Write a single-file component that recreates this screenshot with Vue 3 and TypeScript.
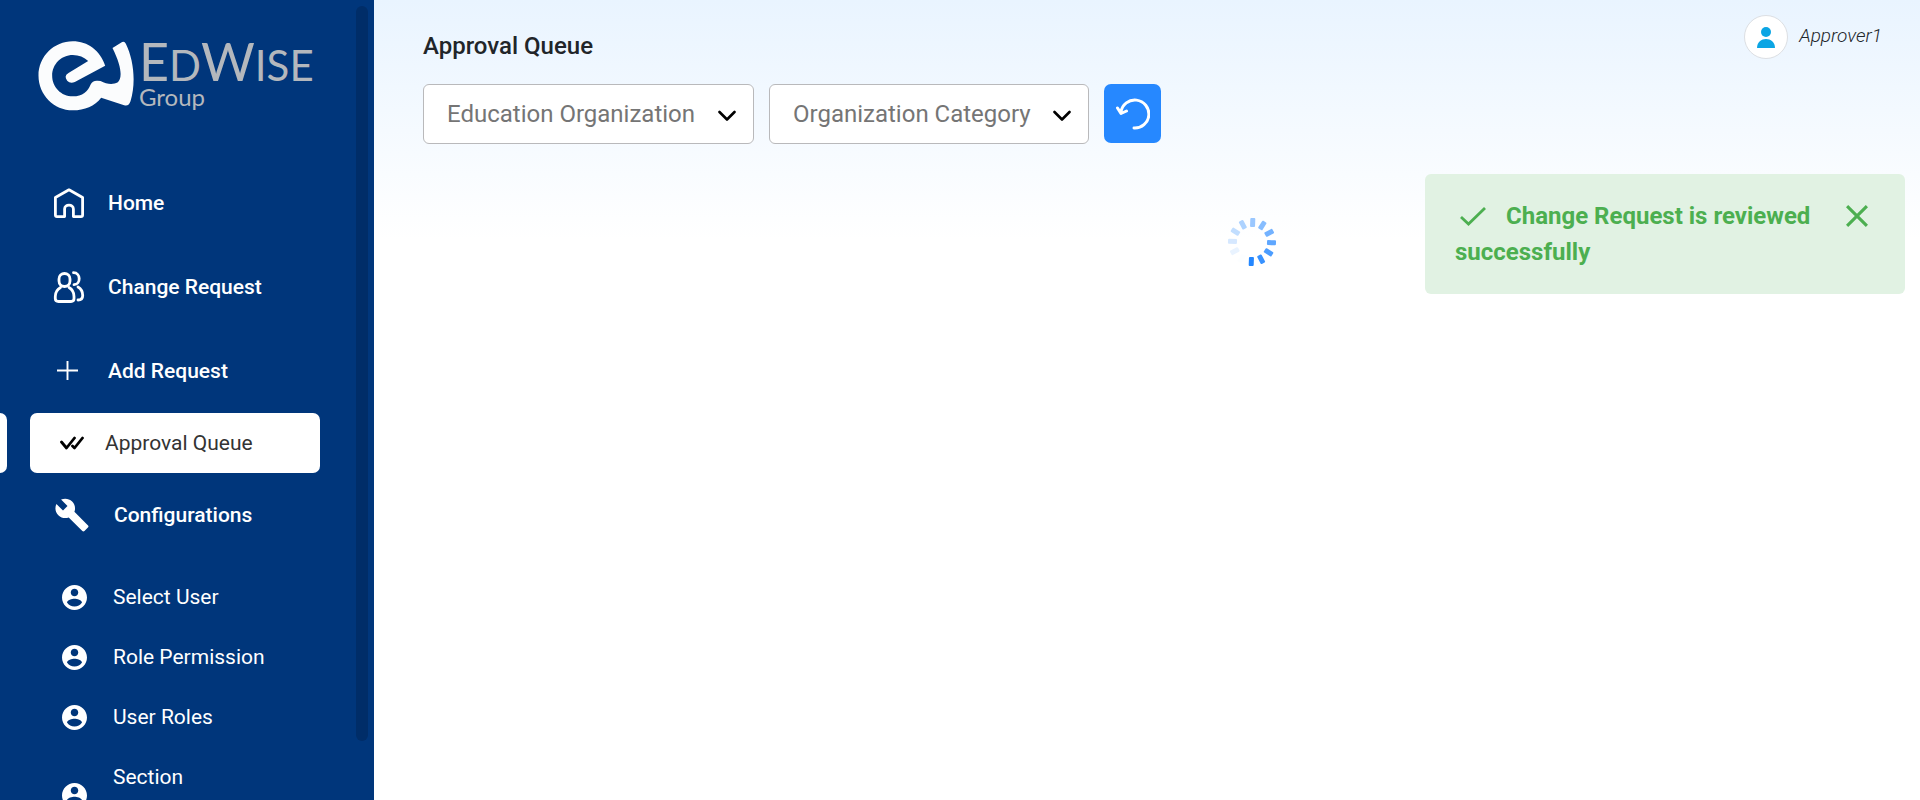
<script setup lang="ts">
import { ref } from 'vue'

const mainLinks = [
  { label: 'Home', icon: 'home' },
  { label: 'Change Request', icon: 'people' },
  { label: 'Add Request', icon: 'plus' },
]
const userLinks = [
  { label: 'Select User', tall: false },
  { label: 'Role Permission', tall: false },
  { label: 'User Roles', tall: false },
  { label: 'Section', tall: true },
]
const organization = ref('')
const category = ref('')
const toastOpen = ref(true)
const spokes = Array.from({ length: 12 }, (_, i) => ({
  angle: 180 - i * 30,
  opacity: 1 - i * 0.09,
}))
</script>

<template>
  <div class="page">
    <aside class="sidebar">
      <div class="brand">
        <svg class="brand-mark" viewBox="0 0 290 210" aria-hidden="true">
          <path d="M189 170C170 195 139 208 104 208C47 208 1 161 1 104S47 1 104 1C149 1 186 29 201 74L110 123Q96 129 87 119Q76 104 91 96L150 60C138 48 122 42 104 42C69 42 42 70 42 104S69 166 104 166C133 166 150 150 157 131Q163 118 178 119L187 120C206 130 224 132 239 124C252 112 252 79 223 21L252 3Q259 0 263 8C287 57 294 125 277 181Q272 197 258 193Z" fill="#fbfcfd" />
        </svg>
        <div class="brand-text">
          <span class="brand-name">E<small>D</small>W<small>ISE</small></span>
          <span class="brand-sub">Group</span>
        </div>
      </div>
      <nav class="nav">
        <a v-for="l in mainLinks" :key="l.label" href="#" class="link">
          <svg v-if="l.icon === 'home'" class="icon" viewBox="0 0 32 32" fill="none" stroke="#fff" stroke-width="2.8" stroke-linejoin="round">
            <path d="M2.400 10.500L16 2.800L29.600 10.500V28Q29.600 29.600 28 29.600H20.400V22C20.400 16.700 11.600 16.700 11.600 22V29.600H4Q2.400 29.600 2.400 28Z" />
          </svg>
          <svg v-else-if="l.icon === 'people'" class="icon" viewBox="0 0 32 32" fill="none" stroke="#fff" stroke-width="2.800" stroke-linecap="round" stroke-linejoin="round">
            <rect x="6" y="2.500" width="11" height="13" rx="5.500" />
            <path d="M7.500 16.500C4 18.500 2.300 20.500 2.300 25.500V27.500Q2.300 30.500 5.500 30.500H18Q21 30.500 21 27.500V25.500C21 20.500 19.500 18.500 16 16.500M20.500 1.700C28 1.700 28 13.500 21 13.700M25 16C28.500 18 29.700 20.500 29.700 24.500C29.700 27.500 28.500 29 25 29" />
          </svg>
          <svg v-else class="icon" viewBox="0 0 32 32" stroke="#fff" stroke-width="1.900">
            <path d="M4 15.500H25M14.500 6V25" />
          </svg>
          {{ l.label }}
        </a>
        <a href="#" class="link active" aria-current="page">
          <svg class="check-icon" viewBox="0 0 24 14" fill="none" stroke="#000" stroke-width="2.800" stroke-linecap="round" stroke-linejoin="round">
            <path d="M1.500 6L6.500 12L14.500 2M12.500 10L14.500 12L22.500 2" />
          </svg>
          Approval Queue
        </a>
        <a href="#" class="link config">
          <svg class="wrench-icon" viewBox="0 0 24 24" fill="#fff"><path d="M22.700 19l-9.100-9.100c.9-2.300.4-5-1.500-6.900-2-2-5-2.400-7.400-1.300L9 6 6 9 1.600 4.700C.4 7.100.9 10.100 2.900 12.100c1.900 1.900 4.600 2.400 6.900 1.500l9.100 9.100c.4.4 1 .4 1.400 0l2.300-2.300c.5-.4.5-1.100.1-1.400z" /></svg>
          Configurations
        </a>
        <a v-for="l in userLinks" :key="l.label" href="#" class="sublink" :class="{ tall: l.tall }">
          <svg class="user-icon" viewBox="2 2 20 20" fill="#fff"><path d="M12 2C6.480 2 2 6.480 2 12s4.480 10 10 10 10-4.480 10-10S17.520 2 12 2zm0 3c1.660 0 3 1.340 3 3s-1.340 3-3 3-3-1.340-3-3 1.340-3 3-3zm0 14.200c-2.500 0-4.710-1.280-6-3.220.03-1.990 4-3.080 6-3.080 1.990 0 5.970 1.090 6 3.080-1.290 1.940-3.500 3.220-6 3.220z" /></svg>
          <span>{{ l.label }}</span>
        </a>
      </nav>
      <div class="scroll-thumb"></div>
    </aside>

    <main class="main">
      <header class="header">
        <h1>Approval Queue</h1>
        <div class="account">
          <span class="avatar">
            <svg viewBox="0 0 18 21" fill="#0ba5e4"><circle cx="9" cy="5" r="5" /><path d="M0 21C0 9 18 9 18 21Z" /></svg>
          </span>
          <em>Approver1</em>
        </div>
      </header>
      <form class="filters" @submit.prevent>
        <div class="field">
          <select v-model="organization" aria-label="Education Organization">
            <option value="">Education Organization</option>
          </select>
          <svg class="chevron" viewBox="0 0 18 12"><path d="M1.500 2L9 9.500L16.500 2" /></svg>
        </div>
        <div class="field">
          <select v-model="category" aria-label="Organization Category">
            <option value="">Organization Category</option>
          </select>
          <svg class="chevron" viewBox="0 0 18 12"><path d="M1.500 2L9 9.500L16.500 2" /></svg>
        </div>
        <button class="reset" type="reset" aria-label="Reset">
          <svg viewBox="0 0 34 32" fill="none" stroke="#fff" stroke-width="3" stroke-linecap="round" stroke-linejoin="round">
            <path d="M18 30A14 14 0 1 0 5 14M1.500 10L5 15.500L10.500 13" />
          </svg>
        </button>
      </form>
      <div class="loading" role="status" aria-label="Loading">
        <svg viewBox="-25 -25 50 50" fill="#2487ff">
          <rect v-for="s in spokes" :key="s.angle" x="-2.500" y="-24" width="5" height="9" rx="1" :opacity="s.opacity" :transform="`rotate(${s.angle + 2})`" />
        </svg>
      </div>
    </main>

    <div v-if="toastOpen" class="toast" role="alert">
      <p>
        <svg class="toast-check" viewBox="0 0 26 20"><path d="M1 11L8.500 18L25 2" /></svg>Change Request is reviewed successfully
      </p>
      <button type="button" aria-label="Close" @click="toastOpen = false">
        <svg viewBox="0 0 20 20"><path d="M1 1L19 19M19 1L1 19" /></svg>
      </button>
    </div>
  </div>
</template>

<style>
body {
  margin: 0;
}
</style>

<style scoped>
.page {
  display: flex;
  height: 100vh;
  overflow: hidden;
  position: relative;
  font-family: Roboto, sans-serif;
  color: #212529;
  background: linear-gradient(#e9f4ff, #fff 240px);
}
.page * {
  box-sizing: border-box;
}
.sidebar {
  position: relative;
  flex: 0 0 374px;
  overflow: hidden;
  background: #00367b;
}
.brand {
  display: flex;
  padding: 41px 0 0 38px;
  gap: 4px;
  height: 161px;
}
.brand-mark {
  width: 97px;
  height: 70px;
}
.brand-text {
  display: flex;
  flex-direction: column;
  font-family: Lato, sans-serif;
  font-weight: 400;
  color: #b4b8bd;
}
.brand-name {
  font-size: 52px;
  line-height: 40px;
}
.brand-name small {
  font-size: 42px;
}
.brand-sub {
  font-size: 24px;
  line-height: 24px;
}
.nav {
  display: flex;
  flex-direction: column;
}
.link {
  display: flex;
  align-items: center;
  gap: 23px;
  height: 84px;
  padding-left: 53px;
  font-size: 21px;
  font-weight: 500;
  color: #fff;
  text-decoration: none;
}
.icon {
  width: 32px;
  height: 32px;
}
.active {
  position: relative;
  height: 60px;
  margin: 0 54px 0 30px;
  padding-left: 30px;
  gap: 21px;
  border-radius: 7px;
  background: #fff;
  color: #333;
  font-weight: 400;
}
.active::before {
  content: "";
  position: absolute;
  left: -37px;
  top: 0;
  width: 14px;
  height: 60px;
  border-radius: 7px;
  background: #fff;
}
.config {
  margin-bottom: 10px;
  padding-left: 54px;
  gap: 24px;
}
.check-icon {
  width: 24px;
  height: 14px;
}
.wrench-icon {
  width: 36px;
  height: 36px;
}
.sublink {
  display: flex;
  align-items: center;
  gap: 26px;
  padding: 12px 62px;
  font-size: 21px;
  line-height: 36px;
  color: #fff;
  text-decoration: none;
}
.tall span {
  height: 72px;
}
.user-icon {
  width: 25px;
  height: 25px;
}
.scroll-thumb {
  position: absolute;
  top: 6px;
  right: 6px;
  width: 12px;
  height: 735px;
  border-radius: 6px;
  background: #002d68;
}
.main {
  flex: 1;
  padding: 15px 38px 0 49px;
}
.header {
  display: flex;
  justify-content: space-between;
  height: 69px;
}
h1 {
  margin: 0;
  padding-top: 17px;
  font-size: 24px;
  line-height: 28px;
  font-weight: 500;
}
.account {
  display: flex;
  align-items: center;
  gap: 11px;
  height: 44px;
  font-size: 19px;
  font-weight: 300;
}
.account em {
  line-height: 24px;
  padding-bottom: 2px;
}
.avatar {
  display: grid;
  place-items: center;
  width: 44px;
  height: 44px;
  border: 1px solid #dcdfe3;
  border-radius: 50%;
  background: #fff;
}
.avatar svg {
  width: 18px;
  height: 21px;
}
.filters {
  display: flex;
  gap: 15px;
}
.field {
  position: relative;
}
.field select {
  height: 60px;
  padding: 0 57px 0 23px;
  border: 1px solid #b9b9bb;
  border-radius: 6px;
  appearance: none;
  background: #fff;
  color: #757575;
  font: 400 24px Roboto, sans-serif;
}
.chevron {
  position: absolute;
  right: 18px;
  top: 26px;
  width: 18px;
  height: 12px;
  fill: none;
  stroke: #000;
  stroke-width: 2.6;
  stroke-linecap: round;
  stroke-linejoin: round;
  pointer-events: none;
}
.reset {
  display: grid;
  place-items: center;
  width: 57px;
  height: 59px;
  padding: 0;
  border: 0;
  border-radius: 7px;
  background: #2688ff;
}
.reset svg {
  width: 34px;
  height: 32px;
}
.loading {
  display: flex;
  justify-content: center;
  padding: 73px 0 0 198px;
}
.loading svg {
  width: 50px;
  height: 50px;
}
.toast {
  position: absolute;
  top: 174px;
  right: 15px;
  display: flex;
  align-items: flex-start;
  justify-content: space-between;
  width: 480px;
  height: 120px;
  padding: 24px 37px 24px 30px;
  border-radius: 6px;
  background: #e1f2e3;
  color: #4caf50;
}
.toast p {
  flex: 1;
  margin: 0;
  font-size: 24px;
  line-height: 36px;
  font-weight: 700;
}
.toast svg {
  fill: none;
  stroke: #4caf50;
  stroke-width: 2.8;
}
.toast-check {
  width: 26px;
  height: 20px;
  margin: 0 20px 0 5px;
  vertical-align: -2px;
}
.toast button {
  padding: 0;
  border: 0;
  background: none;
  height: 36px;
}
.toast button svg {
  display: block;
  width: 22px;
  height: 22px;
}
</style>
